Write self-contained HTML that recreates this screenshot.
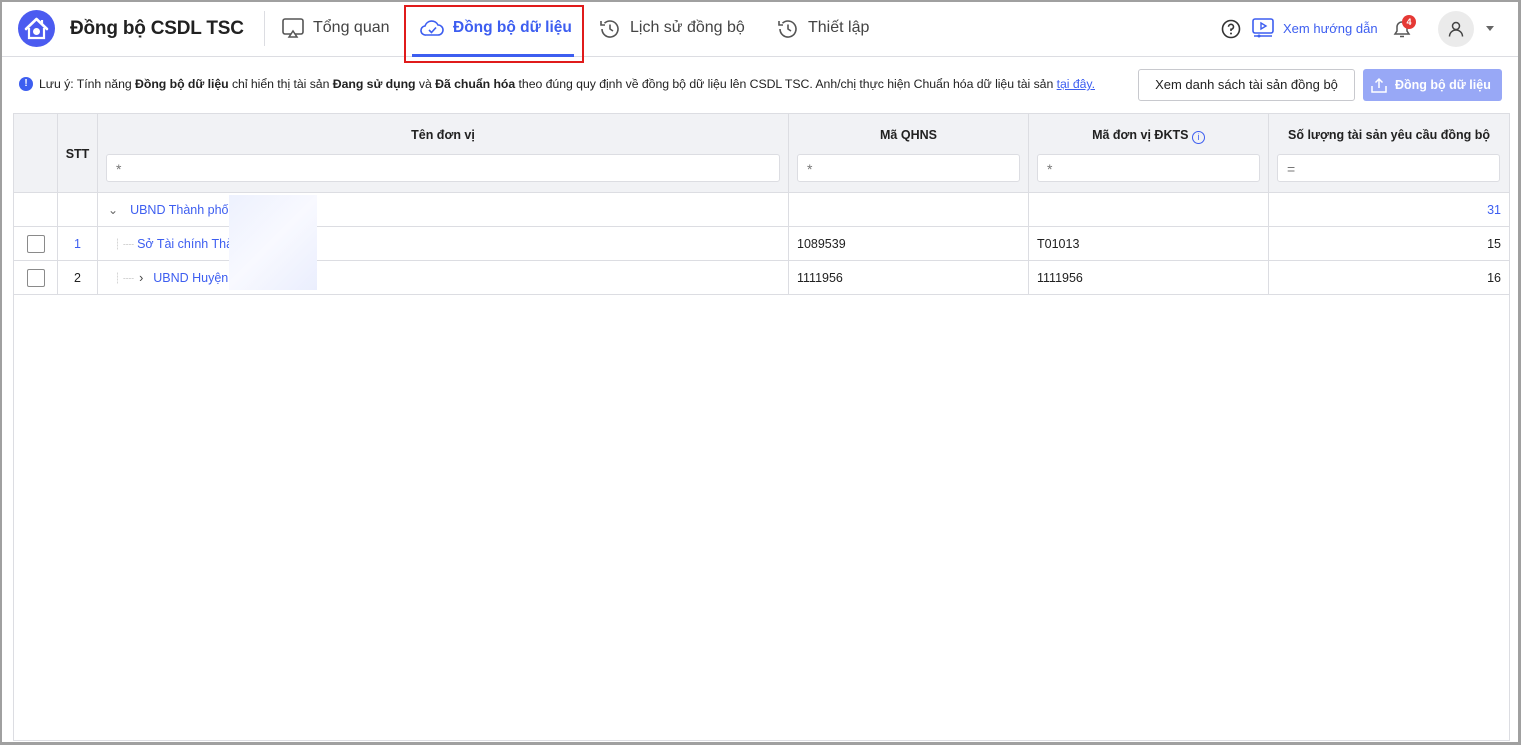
<!DOCTYPE html>
<html><head><meta charset="utf-8"><style>
*{box-sizing:border-box;margin:0;padding:0}
body{width:1521px;height:745px;overflow:hidden;background:#fff;font-family:"Liberation Sans","Noto Sans CJK SC",sans-serif;color:#212121;position:relative}
.frame{position:absolute;left:0;top:0;width:1521px;height:745px;border:2px solid #a0a0a0;border-right-width:3px;border-bottom-width:3px;pointer-events:none;z-index:10}
.hdr{position:absolute;left:0;top:0;width:1521px;height:57px;border-bottom:1px solid #dcdde2}
.abs{position:absolute}
.t{position:absolute;white-space:nowrap}
table{border-collapse:collapse;position:absolute;left:13px;top:113px;font-size:12.5px}
td,th{border:1px solid #dcdde2;padding:0}
th{background:#f1f2f5;font-weight:bold;font-size:12.5px;color:#212121}
.inp{position:absolute;height:28px;background:#fff;border:1px solid #dcdde2;border-radius:3px;font-size:14px;color:#777;padding:6px 9px}
.cb{width:18px;height:18px;border:1px solid #8a8a8a;border-radius:2px;display:inline-block}
.blue{color:#3d5ef0}
</style></head><body>
<div class="frame"></div>
<div class="hdr"></div>
<svg class="abs" style="left:18px;top:10px" width="37" height="37" viewBox="0 0 37 37"><circle cx="18.5" cy="18.5" r="18.5" fill="#4b5bf0"/><path d="M8 19 L18.5 9 L29 19" stroke="#fff" stroke-width="2.6" fill="none" stroke-linecap="round" stroke-linejoin="round"/><path d="M11 18 V28 H26 V18" stroke="#fff" stroke-width="2.2" fill="none"/><circle cx="18.5" cy="21.5" r="3.5" fill="#fff"/><path d="M24 10 v4" stroke="#fff" stroke-width="2.2"/></svg>
<div class="t" style="left:70px;top:18px;font-size:19px;font-weight:bold;letter-spacing:-0.2px">Đồng bộ CSDL TSC</div>
<div class="abs" style="left:264px;top:11px;width:1px;height:35px;background:#dcdde2"></div>
<svg class="abs" style="left:282px;top:18px" width="22" height="20" viewBox="0 0 22 20"><rect x="1" y="1" width="20" height="15" rx="2" fill="none" stroke="#555" stroke-width="1.6"/><path d="M7 19 L11 13 L15 19 Z" fill="#fff" stroke="#555" stroke-width="1.5"/></svg>
<div class="t" style="left:313px;top:19px;font-size:16px;color:#444">Tổng quan</div>
<div class="abs" style="left:404px;top:5px;width:180px;height:58px;border:2px solid #e01b1b"></div>
<svg class="abs" style="left:420px;top:19px" width="24" height="18" viewBox="0 0 24 18"><path d="M6 16 H18 A5 5 0 0 0 18 6 A7 7 0 0 0 5 7 A4.5 4.5 0 0 0 6 16 Z" fill="none" stroke="#3d5ef0" stroke-width="1.6"/><path d="M9 11 L11.5 13.5 L16 8.5" fill="none" stroke="#3d5ef0" stroke-width="1.6"/></svg>
<div class="t" style="left:453px;top:19px;font-size:15.5px;color:#3d5ef0;font-weight:bold">Đồng bộ dữ liệu</div>
<div class="abs" style="left:412px;top:54px;width:162px;height:3px;background:#3d5ef0"></div>
<svg class="abs" style="left:599px;top:18px" width="22" height="22" viewBox="0 0 22 22"><path d="M3 11 A8 8 0 1 0 5.5 5.2" fill="none" stroke="#555" stroke-width="1.6"/><path d="M2 3 V7 H6" fill="none" stroke="#555" stroke-width="1.6"/><path d="M11 6.5 V11 L14 13" fill="none" stroke="#555" stroke-width="1.6"/></svg>
<div class="t" style="left:630px;top:19px;font-size:16px;color:#444">Lịch sử đồng bộ</div>
<svg class="abs" style="left:777px;top:18px" width="22" height="22" viewBox="0 0 22 22"><path d="M3 11 A8 8 0 1 0 5.5 5.2" fill="none" stroke="#555" stroke-width="1.6"/><path d="M2 3 V7 H6" fill="none" stroke="#555" stroke-width="1.6"/><path d="M11 6.5 V11 L14 13" fill="none" stroke="#555" stroke-width="1.6"/></svg>
<div class="t" style="left:808px;top:19px;font-size:16px;color:#444">Thiết lập</div>
<svg class="abs" style="left:1221px;top:19px" width="20" height="20" viewBox="0 0 20 20"><circle cx="10" cy="10" r="8.5" fill="none" stroke="#333" stroke-width="1.6"/><path d="M7.5 7.8 A2.5 2.5 0 1 1 10 10.3 V12" fill="none" stroke="#333" stroke-width="1.6"/><circle cx="10" cy="14.5" r="1" fill="#333"/></svg>
<svg class="abs" style="left:1252px;top:18px" width="22" height="20" viewBox="0 0 22 20"><rect x="1" y="1" width="20" height="14" rx="2" fill="none" stroke="#3d5ef0" stroke-width="1.6"/><path d="M9 5 L14 8 L9 11 Z" fill="none" stroke="#3d5ef0" stroke-width="1.4"/><path d="M2 18 H20" stroke="#3d5ef0" stroke-width="1.5"/><circle cx="7" cy="18" r="1.5" fill="#3d5ef0"/></svg>
<div class="t" style="left:1283px;top:21px;font-size:13px;color:#3d5ef0">Xem hướng dẫn</div>
<svg class="abs" style="left:1391px;top:18px" width="22" height="22" viewBox="0 0 22 22"><path d="M4 16 H18 L16 13 V9 A5 5 0 0 0 6 9 V13 Z" fill="none" stroke="#555" stroke-width="1.5"/><path d="M9 18.5 H13" stroke="#555" stroke-width="1.5"/></svg>
<div class="abs" style="left:1402px;top:15px;width:14px;height:14px;border-radius:7px;background:#e53935;color:#fff;font-size:9px;font-weight:bold;text-align:center;line-height:14px">4</div>
<div class="abs" style="left:1438px;top:11px;width:36px;height:36px;border-radius:18px;background:#ebebeb"></div>
<svg class="abs" style="left:1447px;top:20px" width="18" height="18" viewBox="0 0 18 18"><circle cx="9" cy="6" r="3.5" fill="none" stroke="#444" stroke-width="1.5"/><path d="M2.5 16.5 A6.5 6.5 0 0 1 15.5 16.5" fill="none" stroke="#444" stroke-width="1.5"/></svg>
<div class="abs" style="left:1486px;top:26px;width:0;height:0;border-left:4px solid transparent;border-right:4px solid transparent;border-top:5px solid #666"></div>
<div class="abs" style="left:19px;top:77px;width:14px;height:14px;border-radius:7px;background:#3d5ef0;color:#fff;font-size:10px;font-weight:bold;text-align:center;line-height:14px">!</div>
<div class="t" style="left:39px;top:77px;font-size:12.3px;color:#222;letter-spacing:-0.05px">Lưu ý: Tính năng <b>Đồng bộ dữ liệu</b> chỉ hiển thị tài sản <b>Đang sử dụng</b> và <b>Đã chuẩn hóa</b> theo đúng quy định về đồng bộ dữ liệu lên CSDL TSC. Anh/chị thực hiện Chuẩn hóa dữ liệu tài sản <span class="blue" style="text-decoration:underline">tại đây.</span></div>
<div class="abs" style="left:1138px;top:69px;width:217px;height:32px;border:1px solid #c8c9ce;border-radius:3px;font-size:13px;text-align:center;line-height:30px;color:#222">Xem danh sách tài sản đồng bộ</div>
<div class="abs" style="left:1363px;top:69px;width:139px;height:32px;background:#98a8f6;border-radius:3px;color:#fff;font-size:12.5px;font-weight:bold;line-height:32px;padding-left:32px">Đồng bộ dữ liệu</div>
<svg class="abs" style="left:1370px;top:76px" width="18" height="18" viewBox="0 0 18 18"><path d="M2 10 V16 H16 V10" fill="none" stroke="#fff" stroke-width="1.5"/><path d="M9 12 V3 M5.5 6.5 L9 3 L12.5 6.5" fill="none" stroke="#fff" stroke-width="1.5"/></svg>
<div class="abs" style="left:13px;top:113px;width:1497px;height:628px;border:1px solid #dcdde2"></div>
<table>
<colgroup><col style="width:44px"><col style="width:40px"><col style="width:691px"><col style="width:240px"><col style="width:240px"><col style="width:241px"></colgroup>
<tr style="height:79px"><th></th><th style="vertical-align:top;padding-top:33px">STT</th>
<th style="vertical-align:top;padding-top:14px">Tên đơn vị</th><th style="vertical-align:top;padding-top:14px">Mã QHNS</th><th style="vertical-align:top;padding-top:14px">Mã đơn vị ĐKTS <span class="blue" style="display:inline-block;width:13px;height:13px;border:1px solid #3d5ef0;border-radius:7px;font-size:9px;line-height:11px;font-weight:normal;vertical-align:-1px">i</span></th><th style="vertical-align:top;padding-top:14px">Số lượng tài sản yêu cầu đồng bộ</th></tr>
<tr style="height:34px"><td></td><td></td><td class="blue" style="padding-left:10px"><span style="color:#666;font-size:12px;margin-right:12px">&#8964;</span>UBND Thành phố</td><td></td><td></td><td class="blue" style="text-align:right;padding-right:8px">31</td></tr>
<tr style="height:34px"><td style="text-align:center"><span class="cb" style="vertical-align:middle"></span></td><td style="text-align:center" class="blue">1</td><td class="blue" style="padding-left:14px"><span style="color:#aaa;font-size:11px">┊┈ </span>Sở Tài chính Thàn</td><td style="padding-left:8px">1089539</td><td style="padding-left:8px">T01013</td><td style="text-align:right;padding-right:8px">15</td></tr>
<tr style="height:34px"><td style="text-align:center"><span class="cb" style="vertical-align:middle"></span></td><td style="text-align:center">2</td><td class="blue" style="padding-left:14px"><span style="color:#aaa;font-size:11px">┊┈ </span><span style="color:#444;margin:0 10px 0 2px">›</span>UBND Huyện</td><td style="padding-left:8px">1111956</td><td style="padding-left:8px">1111956</td><td style="text-align:right;padding-right:8px">16</td></tr>
</table>
<div class="inp" style="left:106px;top:154px;width:674px">*</div>
<div class="inp" style="left:797px;top:154px;width:223px">*</div>
<div class="inp" style="left:1037px;top:154px;width:223px">*</div>
<div class="inp" style="left:1277px;top:154px;width:223px">=</div>
<div class="abs" style="left:229px;top:195px;width:88px;height:95px;background:linear-gradient(135deg,#edf1fe,#f8f9ff 50%,#eaeefd)"></div>
</body></html>
